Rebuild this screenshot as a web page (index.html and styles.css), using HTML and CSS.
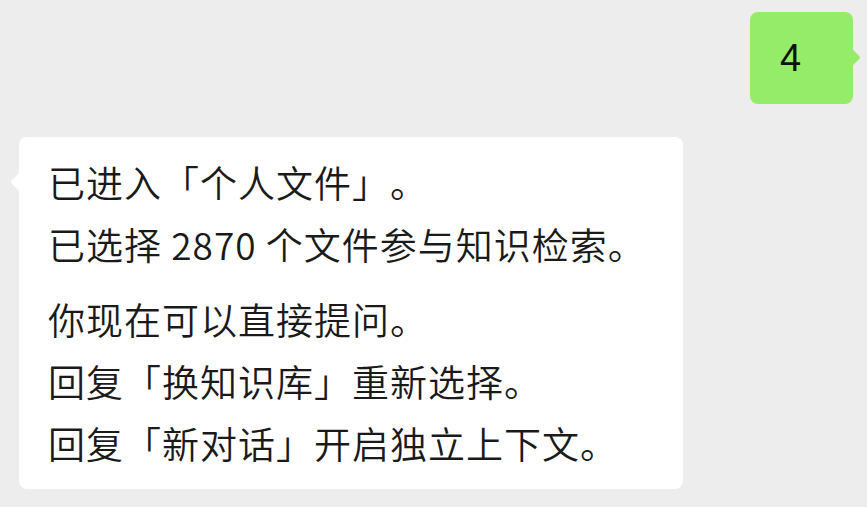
FILE: index.html
```html
<!DOCTYPE html>
<html lang="zh-CN">
<head>
<meta charset="utf-8">
<title>Chat</title>
<link rel="stylesheet" href="styles.css">
</head>
<body>
<div class="chat">
  <div class="row row-out">
    <div class="bubble bubble-out">4</div>
  </div>
  <div class="row row-in">
    <div class="bubble bubble-in">
      <p class="para">已进入「个人文件<span class="close">」</span>。<br>已选择 2870 个文件参与知识检索。</p>
      <p class="para">你现在可以直接提问。<br>回复「换知识库」重新选择。<br>回复「新对话」开启独立上下文。</p>
    </div>
  </div>
</div>
</body>
</html>
```

FILE: styles.css
```css
html, body {
  margin: 0;
  padding: 0;
  background: #ededed;
  height: 100%;
  overflow: hidden;
}
.chat {
  display: flex;
  flex-direction: column;
  font-family: "Noto Sans CJK SC", "Noto Sans", sans-serif;
  color: #1a1a1a;
}
.row {
  display: flex;
}
.row-out {
  justify-content: flex-end;
  padding: 12px 14px 0 0;
}
.row-in {
  justify-content: flex-start;
  padding: 33px 0 0 19px;
}
.bubble {
  position: relative;
  border-radius: 8px;
}
.bubble-out {
  background: #95ec69;
  width: 103px;
  height: 92px;
  box-sizing: border-box;
  padding: 0 22px 0 0;
  display: flex;
  align-items: center;
  justify-content: center;
  font-family: "Liberation Sans", "Noto Sans", sans-serif;
  font-size: 38px;
  color: #111;
}
.bubble-out::after {
  content: "";
  position: absolute;
  right: -5px;
  top: 39px;
  width: 13px;
  height: 13px;
  background: #95ec69;
  transform: rotate(45deg);
  border-radius: 2px;
}
.bubble-in {
  background: #ffffff;
  width: 664px;
  box-sizing: border-box;
  padding: 14px 20px 15px 29px;
  font-size: 37px;
  font-weight: 350;
  line-height: 62px;
  letter-spacing: 1px;
}
.close {
  display: inline-block;
  width: 38px;
}
.bubble-in::before {
  content: "";
  position: absolute;
  left: -6px;
  top: 38px;
  width: 14px;
  height: 14px;
  background: #ffffff;
  transform: rotate(45deg);
  border-radius: 2px;
}
.para {
  margin: 0;
}
.para + .para {
  margin-top: 13px;
}
```
